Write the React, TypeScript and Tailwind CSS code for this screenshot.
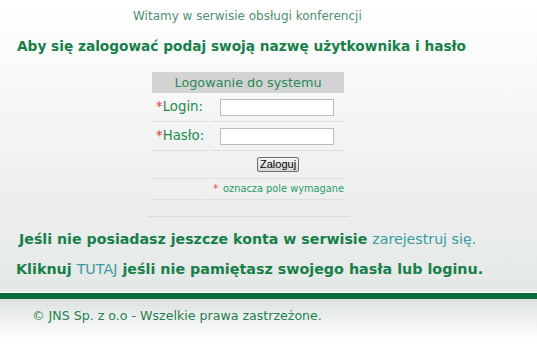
export default function App() {
  const font = { fontFamily: '"DejaVu Sans", Verdana, sans-serif' };
  return (
    <div className="w-[537px] h-[352px] overflow-hidden bg-white" style={font}>
      {/* główna część */}
      <div className="h-[292px] bg-gradient-to-b from-white to-[#e4e8e6] pt-[9px]">
        <div className="pl-[133px] text-[12px] leading-[14px] text-[#4f8f6f]">
          Witamy w serwisie obsługi konferencji
        </div>
        <h1 className="pl-[17px] mt-[15px] text-[13.7px] leading-[16px] font-bold text-[#17804a]">
          Aby się zalogować podaj swoją nazwę użytkownika i hasło
        </h1>

        <div className="ml-[152px] mt-[18px] w-[192px]">
          <div className="h-[21px] bg-[#d3d3d3] text-center text-[12.8px] leading-[21px] text-[#2a8a5a]">
            Logowanie do systemu
          </div>
          <div className="flex h-[29px] items-center">
            <div className="w-[56px] h-full flex items-center pl-[4px] border-b border-[#dcdedc] mr-[2px] text-[13.3px] text-[#1e8a4e]">
              <span className="text-[#e63a3a]">*</span>Login:
            </div>
            <div className="flex-1 h-full flex items-center pl-[10px] border-b border-[#dcdedc]">
              <input className="w-[114px] h-[17px] border border-[#bcbcbc] bg-white outline-none" />
            </div>
          </div>
          <div className="flex h-[29px] items-center">
            <div className="w-[56px] h-full flex items-center pl-[4px] border-b border-[#dcdedc] mr-[2px] text-[13.3px] text-[#1e8a4e]">
              <span className="text-[#e63a3a]">*</span>Hasło:
            </div>
            <div className="flex-1 h-full flex items-center pl-[10px] border-b border-[#dcdedc]">
              <input type="password" className="w-[114px] h-[17px] border border-[#bcbcbc] bg-white outline-none" />
            </div>
          </div>
          <div className="flex h-[28px]">
            <div className="w-[56px] h-full border-b border-[#dcdedc] mr-[2px]" />
            <div className="flex-1 h-full flex items-center pl-[47px] border-b border-[#dcdedc]">
              <button className="h-[15px] px-[2px] border border-[#707070] rounded-[2px] bg-gradient-to-b from-[#f6f6f6] to-[#d6d6d6] text-[11px] leading-[13px] text-black font-['Liberation_Sans',Arial,sans-serif]">
                Zaloguj
              </button>
            </div>
          </div>
          <div className="flex h-[21px]">
            <div className="w-[56px] h-full border-b border-[#dcdedc] mr-[2px]" />
            <div className="flex-1 h-full flex items-center pl-[5px] border-b border-[#dcdedc] text-[9.8px] whitespace-nowrap text-[#2a9a66]">
              <span className="text-[#e63a3a] ml-[4px] mr-[5px]">*</span>oznacza pole wymagane
            </div>
          </div>
        </div>
        <div className="ml-[148px] mt-[16px] w-[202px] border-b border-[#d8dad8]" />

        <p className="pl-[19px] mt-[13px] text-[14.2px] leading-[18px] font-bold text-[#17804a]">
          Jeśli nie posiadasz jeszcze konta w serwisie{" "}
          <a className="font-normal text-[#3a9aa2]">zarejestruj się.</a>
        </p>
        <p className="pl-[16px] mt-[12px] text-[14.3px] leading-[18px] font-bold text-[#17804a]">
          Kliknuj <a className="font-normal text-[#3a9aa2]">TUTAJ</a> jeśli nie pamiętasz swojego hasła lub loginu.
        </p>
      </div>

      {/* stopka */}
      <div className="h-[1px] bg-white" />
      <div className="h-[6px] bg-[#0b6a3e]" />
      <div className="h-[40px] bg-gradient-to-b from-[#dde2df] to-white pl-[32px] pt-[9px] text-[12.6px] leading-[16px] text-[#1f7f4f]">
        © JNS Sp. z o.o - Wszelkie prawa zastrzeżone.
      </div>
    </div>
  );
}
